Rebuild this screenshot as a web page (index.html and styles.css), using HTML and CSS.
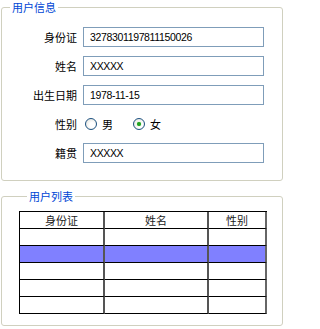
FILE: index.html
```html
<!DOCTYPE html>
<html lang="zh">
<head>
<meta charset="utf-8">
<link rel="stylesheet" href="styles.css">
</head>
<body>
<fieldset class="group info">
  <legend>用户信息</legend>
  <div class="form">
    <label class="lbl">身份证</label>
    <div class="field"><span class="input">3278301197811150026</span></div>
    <label class="lbl">姓名</label>
    <div class="field"><span class="input">XXXXX</span></div>
    <label class="lbl">出生日期</label>
    <div class="field"><span class="input">1978-11-15</span></div>
    <label class="lbl">性别</label>
    <div class="field radios">
      <span class="radio"></span><span class="rtext">男</span>
      <span class="radio checked"></span><span class="rtext">女</span>
    </div>
    <label class="lbl">籍贯</label>
    <div class="field"><span class="input">XXXXX</span></div>
  </div>
</fieldset>
<fieldset class="group list">
  <legend>用户列表</legend>
  <table class="grid">
    <colgroup><col class="c1"><col class="c2"><col class="c3"></colgroup>
    <tr class="head"><td>身份证</td><td>姓名</td><td>性别</td></tr>
    <tr><td></td><td></td><td></td></tr>
    <tr class="sel"><td></td><td></td><td></td></tr>
    <tr><td></td><td></td><td></td></tr>
    <tr><td></td><td></td><td></td></tr>
    <tr><td></td><td></td><td></td></tr>
  </table>
</fieldset>
</body>
</html>
```
FILE: styles.css
```css
html, body {
  margin: 0;
  padding: 0;
  background: #fff;
}
body {
  padding: 1px 1px 0 1px;
  width: 282px;
  font-family: "Noto Sans CJK SC", "Liberation Sans", sans-serif;
  font-size: 11px;
  color: #000;
}
.group {
  margin: 0;
  border: 1px solid #d0d0bf;
  border-radius: 3px;
  padding: 0;
  min-width: 0;
}
.group legend {
  margin-left: 8px;
  padding: 0 2px;
  font-size: 11px;
  line-height: 12px;
  color: #0046d5;
}
.info {
  padding: 14px 0 17px 0;
}
.form {
  display: grid;
  grid-template-columns: 75px 181px;
  grid-auto-rows: 20px;
  column-gap: 6px;
  row-gap: 9px;
  align-items: center;
}
.lbl {
  text-align: right;
  line-height: 20px;
}
.field {
  height: 20px;
  display: flex;
  align-items: center;
}
.input {
  box-sizing: border-box;
  width: 181px;
  height: 20px;
  border: 1px solid #7f9db9;
  padding: 0 0 0 6px;
  font-family: "Liberation Sans", sans-serif;
  font-size: 10.5px;
  letter-spacing: -0.35px;
  line-height: 18px;
  color: #000;
}
.radios {
  padding-left: 2px;
}
.radio {
  box-sizing: border-box;
  width: 12px;
  height: 12px;
  border: 1px solid #1c5180;
  border-radius: 50%;
  background: radial-gradient(circle at 60% 60%, #fff 30%, #dcdcd4 100%);
  display: flex;
  align-items: center;
  justify-content: center;
}
.radio.checked::after {
  content: "";
  width: 4px;
  height: 4px;
  border-radius: 50%;
  background: #21a121;
  box-shadow: 0 0 1px #4cc94c;
}
.rtext {
  margin-left: 5px;
  margin-right: 20px;
}
.list {
  margin-top: 9px;
  padding: 9px 0 11px 17px;
}
.grid {
  border-collapse: separate;
  border-spacing: 0;
  border-top: 1px solid #000;
  border-left: 1px solid #000;
  table-layout: fixed;
  width: 247px;
}
.c1 { width: 85px; }
.c2 { width: 104px; }
.c3 { width: 58px; }
.grid td {
  height: 16px;
  padding: 0;
  border-bottom: 1px solid #000;
  border-right: 2px solid #555;
  text-align: center;
  line-height: 16px;
  font-size: 11px;
  color: #222;
}
.grid td:last-child {
  border-right: 2px solid #666;
}
.grid tr.sel td {
  background: #8080ff;
}
```
